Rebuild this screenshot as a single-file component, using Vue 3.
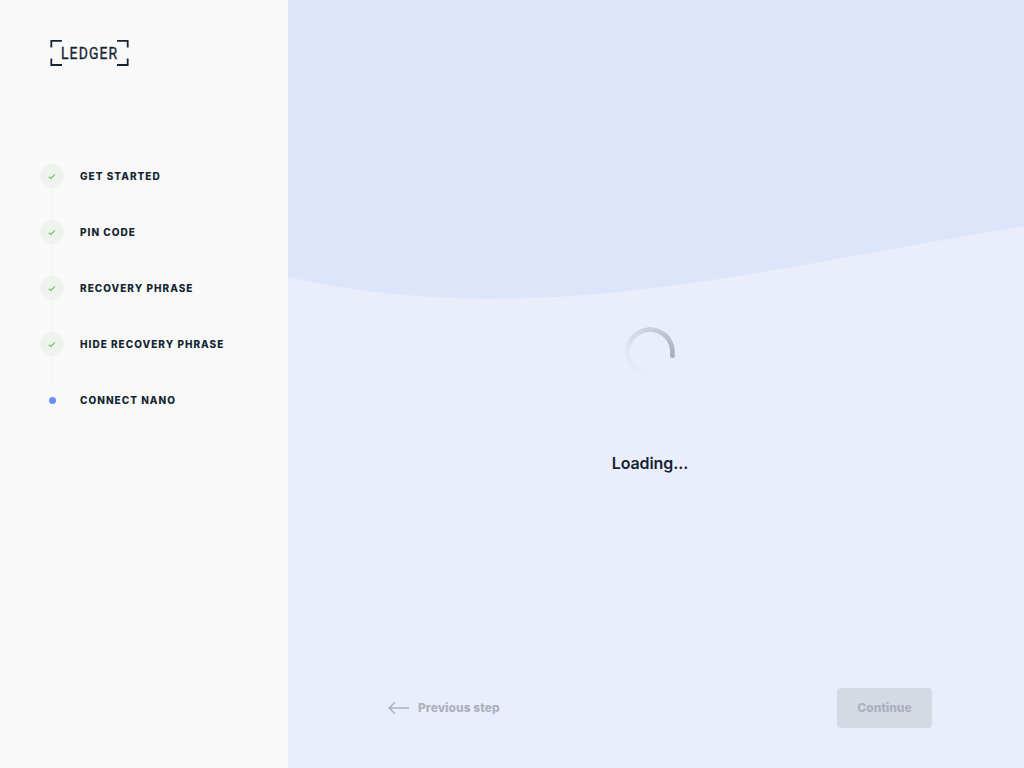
<script setup>
const steps = [
  { label: 'Get started', done: true },
  { label: 'Pin code', done: true },
  { label: 'Recovery phrase', done: true },
  { label: 'Hide recovery phrase', done: true },
  { label: 'Connect Nano', done: false },
]
</script>

<template>
  <div class="app">
    <aside class="sidebar">
      <svg class="logo" width="80" height="28" viewBox="0 0 80 28">
        <path d="M1.3 8.5V1.8H12M67 1.8H77.7V8.5M1.3 19.5V26H12M67 26H77.7V19.5" fill="none" stroke="#142533" stroke-width="1.8" />
        <text transform="translate(11 19.6) scale(.87 1)">LEDGER</text>
      </svg>
      <ol class="steps">
        <li v-for="step in steps" :key="step.label" class="step">
          <span class="marker" :class="{ done: step.done }">
            <svg v-if="step.done" width="8" height="7" viewBox="0 0 8 7">
              <path d="M.8 3.6 2.8 5.4 7 1.4" fill="none" stroke="#66be54" stroke-width="1.1" />
            </svg>
            <i v-else class="dot"></i>
          </span>
          <span class="label">{{ step.label }}</span>
        </li>
      </ol>
    </aside>
    <main class="content">
      <svg class="wave" width="736" height="300" viewBox="0 0 736 300">
        <path d="M0 0H736V226C520 262 370 298.7 205 298.7C135 298.7 65 292 0 277Z" fill="#dce5fa" />
      </svg>
      <section class="loading">
        <div class="spinner"><i class="ring"></i><i class="cap"></i></div>
        <p>Loading...</p>
      </section>
      <footer class="actions">
        <button class="previous" disabled>
          <svg width="22" height="14" viewBox="0 0 22 14">
            <path d="M21 7H1.5M7 1.2 1.2 7 7 12.8" fill="none" stroke="currentColor" stroke-width="1.5" />
          </svg>
          Previous step
        </button>
        <button class="continue" disabled>Continue</button>
      </footer>
    </main>
  </div>
</template>

<style>
body { margin: 0; }
</style>

<style scoped>
.app { display: flex; width: 1024px; height: 768px; overflow: hidden; font-family: Inter, sans-serif; color: #142533; }
.sidebar { box-sizing: border-box; width: 288px; padding: 39px 40px 0; background: #f9f9f9; }
.logo { display: block; margin-left: 10px; }
.logo text { font: 400 16px Roboto, sans-serif; letter-spacing: 1.3px; fill: #142533; stroke: #142533; stroke-width: .35px; }
.steps { list-style: none; margin: 97px 0 0; padding: 0; }
.step { position: relative; display: flex; align-items: center; gap: 16px; height: 24px; margin-bottom: 32px; }
.step:not(:last-child)::after { content: ''; position: absolute; left: 12px; top: 24px; width: 1px; height: 32px; background: #f0f1f1; }
.step:nth-last-child(2)::after { height: 31px; }
.marker { display: flex; align-items: center; justify-content: center; width: 24px; height: 24px; border-radius: 50%; }
.marker.done { background: #eef3ed; }
.marker svg { margin: 1px 0 0 0; }
.dot { width: 7px; height: 7px; margin: 1px 0 0 1px; border-radius: 50%; background: #6490f1; }
.label { font-size: 10px; line-height: 16px; font-weight: 800; letter-spacing: 1.02px; text-transform: uppercase; white-space: nowrap; }
.content { position: relative; flex: 1; display: flex; flex-direction: column; background: #eaeefa; }
.wave { position: absolute; left: 0; top: 0; }
.loading { position: relative; flex: 1; display: flex; flex-direction: column; align-items: center; padding: 327px 12px 0 0; }
.spinner { position: relative; width: 50px; height: 50px; }
.ring { position: absolute; inset: 0; border-radius: 50%; background: conic-gradient(from 98deg, transparent 0deg, transparent 70deg, rgba(20, 37, 51, .03) 172deg, rgba(20, 37, 51, .15) 262deg, rgba(20, 37, 51, .3) 360deg); mask: radial-gradient(circle, transparent 19.6px, #000 20.4px); }
.cap { position: absolute; left: 45px; top: 28px; width: 5px; height: 2.5px; border-radius: 0 0 3px 3px; background: #aab1bc; transform: rotate(8deg); }
.loading p { margin: 74px 0 0; font-size: 16px; line-height: 24px; font-weight: 600; letter-spacing: -.1px; }
.actions { display: flex; align-items: center; justify-content: space-between; height: 40px; padding: 0 92px 40px 100px; }
button { border: 0; padding: 0; font: 800 12px/16px Inter, sans-serif; color: #abb2be; background: none; }
.previous { display: flex; align-items: center; gap: 8px; letter-spacing: .05px; }
.continue { width: 95px; height: 40px; border-radius: 4px; background: #d5d9e4; }
</style>
